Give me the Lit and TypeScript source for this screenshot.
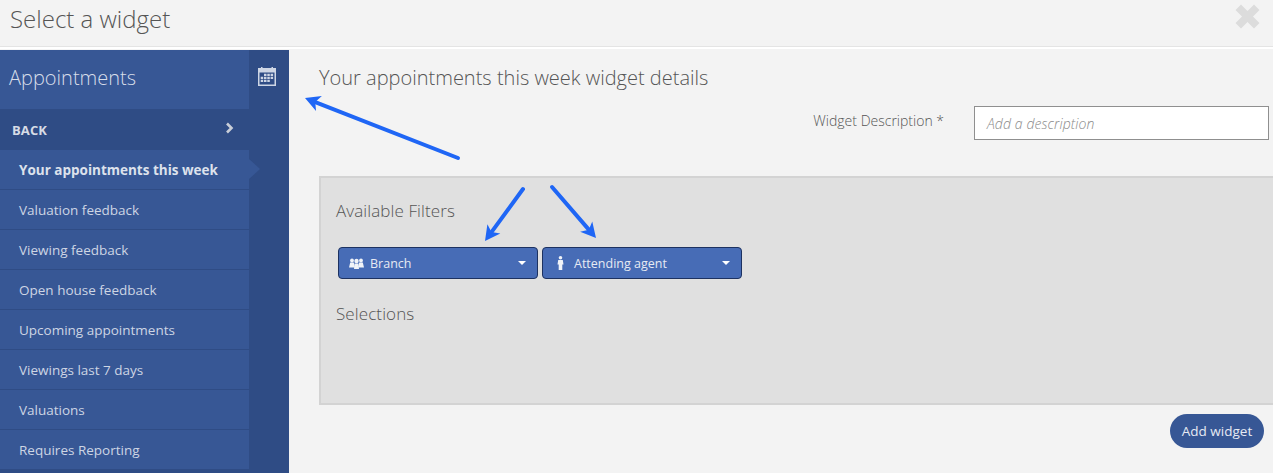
import { LitElement, html, css, svg } from "lit";
import { customElement } from "lit/decorators.js";

const ITEMS = ["Valuation feedback", "Viewing feedback", "Open house feedback", "Upcoming appointments", "Viewings last 7 days", "Valuations", "Requires Reporting"];

const arrow = (x1: number, y1: number, x2: number, y2: number) => {
  const a = Math.atan2(y2 - y1, x2 - x1);
  const len = 15, wing = 8, back = 11;
  const ux = Math.cos(a), uy = Math.sin(a);
  const bx = x2 - ux * len, by = y2 - uy * len;
  const nx = x2 - ux * back, ny = y2 - uy * back;
  const p1 = `${bx - uy * wing},${by + ux * wing}`;
  const p2 = `${bx + uy * wing},${by - ux * wing}`;
  return svg`<line x1=${x1} y1=${y1} x2=${nx} y2=${ny} stroke="#1f66f5" stroke-width="4" stroke-linecap="round"></line>
    <polygon points="${x2},${y2} ${p1} ${nx},${ny} ${p2}" fill="#1f66f5"></polygon>`;
};

@customElement("app-root")
export class AppRoot extends LitElement {
  static styles = css`
    :host { display: block; width: 1273px; height: 473px; overflow: hidden; position: relative; background: #f3f3f3; font-family: "Open Sans", sans-serif; color: #555; }
    .header { height: 47px; box-sizing: border-box; border-bottom: 1px solid #e4e4e4; display: flex; justify-content: space-between; align-items: flex-start; padding: 0 13px 0 10px; margin-bottom: 3px; box-shadow: 0 1px 0 #fff, 0 2px 0 #fff; }
    .header h1 { margin: 0; font-size: 24px; font-weight: 300; line-height: 38px; color: #555; }
    .close { margin-top: 4px; display: block; }
    .body { display: flex; height: 423px; }
    .side { width: 289px; flex: none; background: #2f4c85; display: flex; flex-direction: column; }
    .side-top { height: 59px; display: flex; }
    .side-title { width: 249px; box-sizing: border-box; background: #375795; color: #d8deea; font-size: 20px; font-weight: 300; line-height: 56px; padding-left: 9px; }
    .rail-icon { flex: 1; display: flex; justify-content: center; padding: 17px 4px 0 0; align-items: flex-start; }
    .back { width: 249px; height: 41px; box-sizing: border-box; display: flex; justify-content: space-between; align-items: center; padding: 0 15px 0 12px; color: #d7dce6; font-size: 13px; font-weight: 700; letter-spacing: 0.1px; }
    .back svg { margin-top: -3px; }
    .item { width: 249px; height: 40px; box-sizing: border-box; background: #375795; border-bottom: 1px solid #2f4c85; color: #cdd5e4; font-size: 13.5px; line-height: 41px; padding-left: 19px; white-space: nowrap; position: relative; flex: none; }
    .item.active { color: #dde2ec; font-weight: 700; }
    .item.active::after { content: ""; position: absolute; left: 100%; top: 9px; border-left: 11px solid #375795; border-top: 10px solid transparent; border-bottom: 10px solid transparent; }
    .main { flex: 1; padding-left: 30px; min-width: 0; display: flex; flex-direction: column; }
    .main h2 { margin: 0; font-size: 20px; font-weight: 300; line-height: 26px; padding-top: 15px; color: #555; }
    .desc { display: flex; justify-content: flex-end; margin-top: 15px; padding-right: 4px; height: 35px; }
    .desc label { font-size: 14px; font-weight: 300; line-height: 30px; color: #555; margin-right: 30px; }
    .input { width: 295px; height: 34px; box-sizing: border-box; background: #fff; border: 1px solid #8f8f8f; font-size: 14px; font-style: italic; font-weight: 300; color: #8a8a8a; padding-left: 12px; line-height: 33px; letter-spacing: 0.1px; }
    .panel { margin-top: 35px; height: 229px; box-sizing: border-box; background: #e0e0e0; border-top: 2px solid #d3d3d3; border-left: 2px solid #d3d3d3; border-bottom: 2px solid #d3d3d3; padding: 0 0 0 15px; }
    .panel h3 { margin: 0; font-size: 17px; font-weight: 300; color: #555; line-height: 22px; letter-spacing: 0.1px; }
    .panel h3.a { padding-top: 22px; }
    .panel h3.s { padding-top: 24px; }
    .filters { display: flex; gap: 4px; margin-top: 25px; padding-left: 2px; }
    .filter { width: 200px; height: 32px; box-sizing: border-box; background: #476cb6; border: 1px solid #1d3261; border-radius: 4px; color: #e6eaf3; font-size: 12.5px; display: flex; align-items: center; padding-left: 9px; padding-right: 11px; }
    .filter .ic { width: 17px; display: flex; justify-content: center; margin-right: 5px; }
    .filter span { flex: 1; }
    .caret { width: 0; height: 0; border-left: 4px solid transparent; border-right: 4px solid transparent; border-top: 4px solid #fff; }
    .foot { display: flex; justify-content: flex-end; padding-top: 9px; padding-right: 9px; }
    .btn { height: 34px; width: 94px; border-radius: 17px; background: #375795; color: #e6eaf3; font-size: 13.5px; display: flex; align-items: center; justify-content: center; }
    .arrows { position: absolute; left: 0; top: 0; pointer-events: none; }
  `;

  render() {
    return html`
      <div class="header">
        <h1>Select a widget</h1>
        <svg class="close" width="25" height="25" viewBox="0 0 25 25"><path d="M0.500 6 L6 0.500 L12.500 7 L19 0.500 L24.500 6 L18 12.500 L24.500 19 L19 24.500 L12.500 18 L6 24.500 L0.500 19 L7 12.500 Z" fill="#dcdcdc"></path></svg>
      </div>
      <div class="body">
        <div class="side">
          <div class="side-top">
            <div class="side-title">Appointments</div>
            <div class="rail-icon">
              <svg width="18" height="19" viewBox="0 0 18 19">
                <path fill-rule="evenodd" fill="#ced6e5" d="M0 1h3V0h1.500v1h9V0H15v1h3v18H0z M1.500 5.500v12h15v-12z"></path>
                <path fill="#ced6e5" d="M6 6.800h2.500v2.200H6z M9.300 6.800h2.500v2.200H9.300z M12.600 6.800h2.500v2.200h-2.500z M2.700 9.800h2.500v2.200H2.700z M6 9.800h2.500v2.200H6z M9.300 9.800h2.500v2.200H9.300z M12.600 9.800h2.500v2.200h-2.500z M2.700 12.800h2.500v2.200H2.700z M6 12.800h2.500v2.200H6z M9.300 12.800h2.500v2.200H9.300z"></path>
              </svg>
            </div>
          </div>
          <div class="back">
            <span>BACK</span>
            <svg width="9" height="12" viewBox="0 0 9 12"><path d="M2 1.500 L6.500 6 L2 10.500" fill="none" stroke="#c9ced8" stroke-width="2.600"></path></svg>
          </div>
          <div class="item active">Your appointments this week</div>
          ${ITEMS.map((t) => html`<div class="item">${t}</div>`)}
        </div>
        <div class="main">
          <h2>Your appointments this week widget details</h2>
          <div class="desc">
            <label>Widget Description *</label>
            <div class="input">Add a description</div>
          </div>
          <div class="panel">
            <h3 class="a">Available Filters</h3>
            <div class="filters">
              <div class="filter">
                <div class="ic">
                  <svg width="15" height="11" viewBox="0 0 15 11" fill="#f0f3f8">
                    <circle cx="3" cy="2.500" r="1.900"></circle><circle cx="12" cy="2.500" r="1.900"></circle><path d="M0 9.500 L1.200 4.500 H4.800 L6 9.500 Z M9 9.500 L10.200 4.500 H13.800 L15 9.500 Z"></path>
                    <circle cx="7.500" cy="3" r="2.200"></circle><path d="M5 11 L5.600 5.500 H9.400 L10 11 Z"></path>
                  </svg>
                </div>
                <span>Branch</span><i class="caret"></i>
              </div>
              <div class="filter">
                <div class="ic">
                  <svg width="7" height="14" viewBox="0 0 7 14" fill="#f0f3f8">
                    <circle cx="3.500" cy="1.800" r="1.800"></circle><path d="M1.200 4 H5.800 L6.500 8.500 H5.300 V14 H1.700 V8.500 H0.500 Z"></path>
                  </svg>
                </div>
                <span>Attending agent</span><i class="caret"></i>
              </div>
            </div>
            <h3 class="s">Selections</h3>
          </div>
          <div class="foot"><div class="btn">Add widget</div></div>
        </div>
      </div>
      <svg class="arrows" width="1273" height="473">
        ${arrow(458, 158, 305, 98)}
        ${arrow(523, 189, 485, 241)}
        ${arrow(552, 187, 596, 238)}
      </svg>
    `;
  }
}
